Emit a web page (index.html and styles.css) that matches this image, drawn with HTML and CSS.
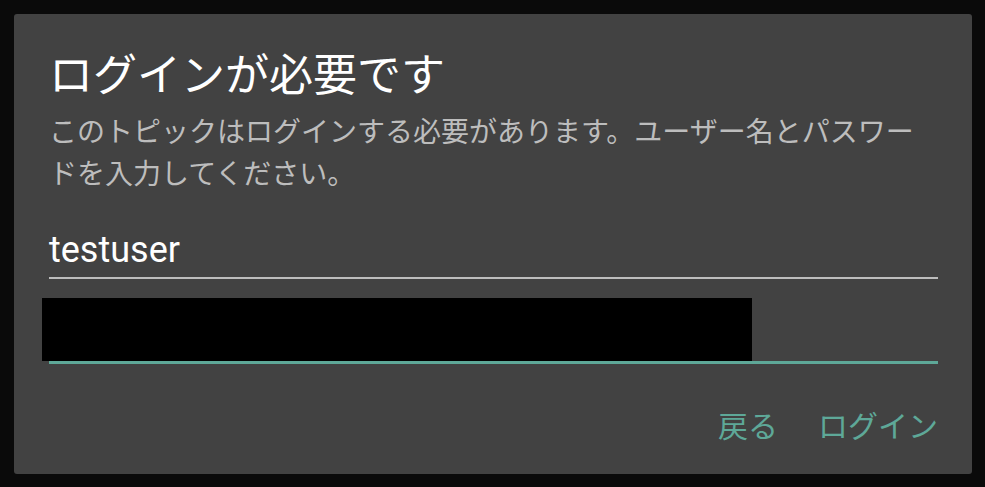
FILE: index.html
```html
<!DOCTYPE html>
<html lang="ja">
<head>
<meta charset="UTF-8" />
<meta name="viewport" content="width=device-width, initial-scale=1" />
<title>ログイン</title>
<link rel="stylesheet" href="styles.css">
</head>
<body>

<div class="dialog">
  <h2 class="dialog-title">ログインが必要です</h2>
  <p class="dialog-message">このトピックはログインする必要があります。ユーザー名とパスワードを入力してください。</p>

  <div class="field">
    <div class="field-value">testuser</div>
  </div>

  <div class="field field-focused">
    <div class="field-value"></div>
    <div class="redacted"></div>
  </div>

  <div class="dialog-actions">
    <button type="button">戻る</button>
    <button type="button">ログイン</button>
  </div>
</div>

</body>
</html>
```

FILE: styles.css
```css
body {
  margin: 0;
  padding: 14px;
  background: #0a0a0a;
  font-family: "Noto Sans CJK JP", "Noto Sans", sans-serif;
}
.dialog {
  width: 958px;
  height: 460px;
  box-sizing: border-box;
  padding: 36px 34px 0 35px;
  background: #424242;
  border-radius: 3px;
}
.dialog-title {
  margin: 0;
  font-size: 44px;
  font-weight: normal;
  line-height: 44px;
  color: #fff;
}
.dialog-message {
  margin: 15px 0 0;
  font-size: 28px;
  line-height: 42px;
  color: #bdbdbd;
}
.field {
  position: relative;
  margin-top: 34px;
  border-bottom: 2px solid #bdbdbd;
  height: 50px;
}
.field-value {
  font-family: Roboto, "Noto Sans", sans-serif;
  font-size: 36px;
  line-height: 46px;
  color: #fff;
}
.field-focused {
  margin-top: 32px;
  border-bottom: 3px solid #5ea898;
}
.redacted {
  position: absolute;
  left: -7px;
  top: -13px;
  width: 710px;
  height: 63px;
  background: #000;
}
.dialog-actions {
  display: flex;
  justify-content: flex-end;
  gap: 40px;
  margin-top: 40px;
}
button {
  padding: 0;
  border: none;
  background: none;
  font-family: "Noto Sans CJK JP", sans-serif;
  font-size: 30px;
  line-height: 40px;
  color: #5ea898;
  cursor: pointer;
}
```
